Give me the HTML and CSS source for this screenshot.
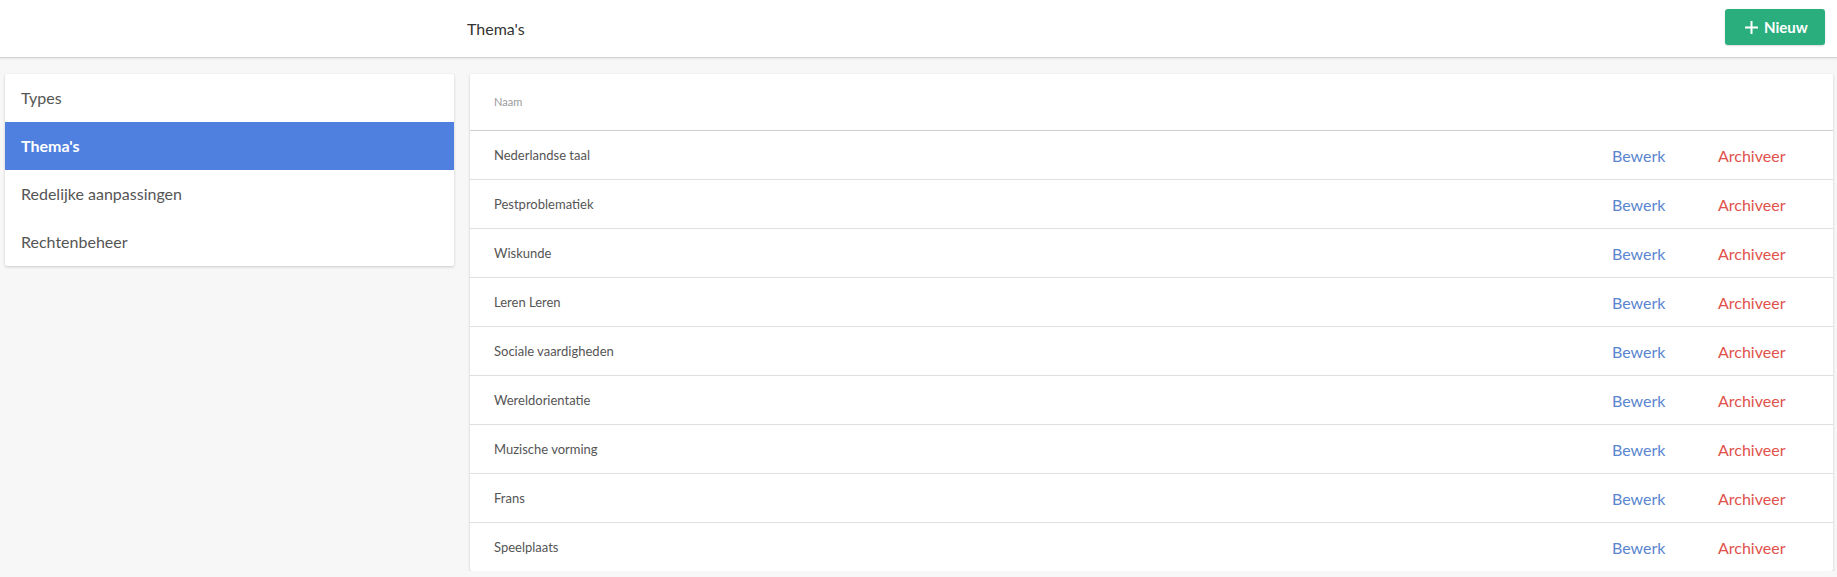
FILE: index.html
```html
<!DOCTYPE html>
<html lang="nl">
<head>
  <meta charset="UTF-8" />
  <meta name="viewport" content="width=device-width, initial-scale=1" />
  <title>Thema's</title>
  <link rel="stylesheet" href="styles.css">
</head>
<body>

  <header class="topbar">
    <div class="topbar-title">Thema's</div>
    <button class="btn-new">
      <svg width="15" height="15" viewBox="0 0 15 15" aria-hidden="true">
        <path d="M7.5 1v13M1 7.5h13" stroke="#fff" stroke-width="2" fill="none" />
      </svg>
      Nieuw
    </button>
  </header>

  <div class="page">
    <nav class="sidemenu">
      <a class="sidemenu-item">Types</a>
      <a class="sidemenu-item active">Thema's</a>
      <a class="sidemenu-item">Redelijke aanpassingen</a>
      <a class="sidemenu-item">Rechtenbeheer</a>
    </nav>

    <main class="card">
      <div class="table-head">Naam</div>
      <div class="row"><span class="name">Nederlandse taal</span><a class="edit">Bewerk</a><a class="archive">Archiveer</a></div>
      <div class="row"><span class="name">Pestproblematiek</span><a class="edit">Bewerk</a><a class="archive">Archiveer</a></div>
      <div class="row"><span class="name">Wiskunde</span><a class="edit">Bewerk</a><a class="archive">Archiveer</a></div>
      <div class="row"><span class="name">Leren Leren</span><a class="edit">Bewerk</a><a class="archive">Archiveer</a></div>
      <div class="row"><span class="name">Sociale vaardigheden</span><a class="edit">Bewerk</a><a class="archive">Archiveer</a></div>
      <div class="row"><span class="name">Wereldorientatie</span><a class="edit">Bewerk</a><a class="archive">Archiveer</a></div>
      <div class="row"><span class="name">Muzische vorming</span><a class="edit">Bewerk</a><a class="archive">Archiveer</a></div>
      <div class="row"><span class="name">Frans</span><a class="edit">Bewerk</a><a class="archive">Archiveer</a></div>
      <div class="row"><span class="name">Speelplaats</span><a class="edit">Bewerk</a><a class="archive">Archiveer</a></div>
    </main>
  </div>

</body>
</html>
```

FILE: styles.css
```css
body {
  margin: 0;
  font-family: 'Lato', 'Open Sans', sans-serif;
  background-color: #f7f7f7;
  color: #555;
}

.topbar {
  height: 57px;
  background-color: #fff;
  border-bottom: 1px solid #d4d4d4;
  box-shadow: 0 1px 2px rgba(0,0,0,0.08);
  display: flex;
  align-items: center;
  justify-content: space-between;
  padding: 0 12px 0 467px;
}

.topbar-title {
  font-size: 16px;
  color: #333;
  margin-top: -1px;
}

.btn-new {
  display: flex;
  align-items: center;
  gap: 5px;
  height: 36px;
  width: 100px;
  padding: 0 0 0 19px;
  margin-top: -3px;
  border: none;
  border-radius: 3px;
  background-color: #2bae7e;
  color: #fff;
  font-family: 'Lato', sans-serif;
  font-size: 15px;
  font-weight: bold;
  box-shadow: 0 1px 2px rgba(0,0,0,0.15);
  cursor: pointer;
}

.page {
  display: grid;
  grid-template-columns: 449px 1fr;
  gap: 16px;
  align-items: start;
  padding: 16px 4px 0 5px;
}

.sidemenu {
  background-color: #fff;
  box-shadow: 0 1px 3px rgba(0,0,0,0.18);
  border-radius: 2px;
  display: flex;
  flex-direction: column;
}

.sidemenu-item {
  height: 48px;
  line-height: 48px;
  padding-left: 16px;
  font-size: 16px;
  color: #555;
  cursor: pointer;
}

.sidemenu-item.active {
  background-color: #4f80e0;
  color: #fff;
  font-weight: bold;
}

.card {
  background-color: #fff;
  box-shadow: 0 1px 3px rgba(0,0,0,0.18);
  border-radius: 2px;
}

.table-head {
  height: 56px;
  line-height: 56px;
  padding-left: 24px;
  font-size: 11px;
  color: #9a9a9a;
  border-bottom: 1px solid #cfcfcf;
}

.row {
  display: flex;
  align-items: center;
  height: 48px;
  padding-left: 24px;
  border-bottom: 1px solid #e0e0e0;
}

.row:last-child {
  border-bottom: none;
}

.name {
  flex: 1;
  font-size: 13px;
  color: #555;
}

.edit,
.archive {
  font-size: 16px;
  cursor: pointer;
}

.edit {
  color: #5a85d0;
  width: 106px;
}

.archive {
  color: #e0524b;
  width: 115px;
}
```
